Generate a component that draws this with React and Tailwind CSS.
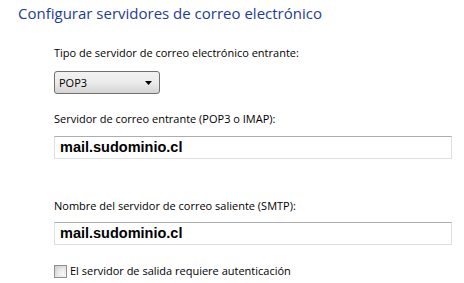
export default function App() {
  return (
    <div className="w-[464px] h-[283px] bg-white overflow-hidden font-['Open_Sans',sans-serif] text-black">
      <h1 className="pl-[18px] pt-[2px] text-[15px] leading-[22px] text-[#1e3c96]">
        Configurar servidores de correo electrónico
      </h1>

      <div className="pl-[54px] pr-[12px]">
        <p className="mt-[21px] text-[11px] leading-[16px]">Tipo de servidor de correo electrónico entrante:</p>
        <div className="mt-[10px] w-[106px] h-[23px] rounded-[3px] border border-[#707070] bg-gradient-to-b from-[#f2f2f2] via-[#ebebeb] to-[#d4d4d4] flex items-center justify-between px-[4px]">
          <span className="text-[11px] leading-none">POP3</span>
          <svg width="7" height="4" viewBox="0 0 7 4" className="mr-[3px]">
            <path d="M0 0h7L3.5 4z" fill="#000" />
          </svg>
        </div>

        <p className="mt-[17px] text-[11px] leading-[16px]">Servidor de correo entrante (POP3 o IMAP):</p>
        <div className="mt-[9px] w-[398px] h-[23px] border border-[#dbdfe6] border-t-[#abadb3] flex items-center px-[5px]">
          <span className="font-['Liberation_Sans',sans-serif] font-bold text-[14.5px] leading-none">mail.sudominio.cl</span>
        </div>

        <p className="mt-[39px] text-[11px] leading-[16px]">Nombre del servidor de correo saliente (SMTP):</p>
        <div className="mt-[8px] w-[398px] h-[23px] border border-[#dbdfe6] border-t-[#abadb3] flex items-center px-[5px]">
          <span className="font-['Liberation_Sans',sans-serif] font-bold text-[14.5px] leading-none">mail.sudominio.cl</span>
        </div>

        <label className="mt-[18px] flex items-center gap-[3px]">
          <span className="w-[13px] h-[13px] border border-[#8e8f8f] bg-gradient-to-br from-[#cbcfd5] to-[#f6f6f6] p-[2px] flex">
            <span className="flex-1 bg-gradient-to-br from-[#dcdcdc] to-[#fbfbfb]" />
          </span>
          <span className="text-[11px] leading-[16px]">El servidor de salida requiere autenticación</span>
        </label>
      </div>
    </div>
  );
}
